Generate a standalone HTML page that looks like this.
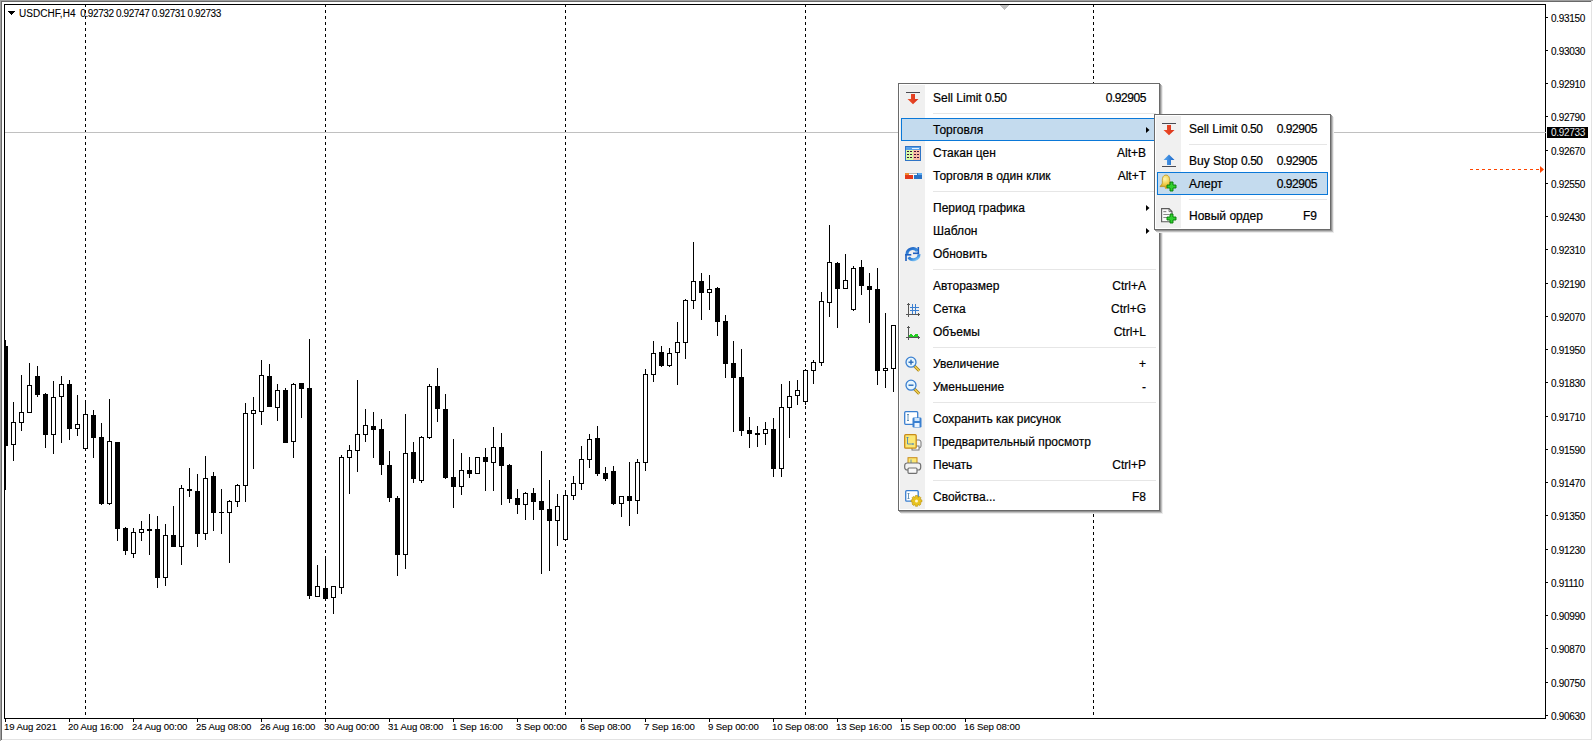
<!DOCTYPE html>
<html><head><meta charset="utf-8"><title>chart</title><style>
html,body{margin:0;padding:0;width:1593px;height:741px;overflow:hidden;background:#fff}
body{position:relative;font-family:"Liberation Sans",sans-serif;color:#000}
svg.c{position:absolute;left:0;top:0}
.t{position:absolute;white-space:nowrap;font-size:10px;line-height:12px;letter-spacing:-0.1px;-webkit-text-stroke:0.1px #000}
.mn{position:absolute;box-sizing:border-box;border:1px solid #6a6a6a;background:#fff;box-shadow:1px 1px 0 #959595,2px 2px 0 #c0c0c0,3px 3px 0 #ececec}
.icol{position:absolute;background:#f0f0f0}
.sep{position:absolute;height:1px;background:#e6e6e6}
.hl{position:absolute;box-sizing:border-box;border:1px solid #0a78d8;background:#c4dbee}
.mt{position:absolute;font-size:12px;line-height:23px;white-space:nowrap;-webkit-text-stroke:0.2px #000}
.dg{letter-spacing:-0.45px}
.ic{position:absolute}
.pl{left:1551px;font-size:10px;letter-spacing:-0.3px}
.tl{top:721px;font-size:9.6px;letter-spacing:-0.1px}
</style></head><body>

<svg class="c" width="1593" height="741" shape-rendering="crispEdges"><rect x="0" y="0" width="1593" height="1" fill="#a0a0a0"/><rect x="0" y="0" width="1" height="741" fill="#a0a0a0"/><rect x="1" y="1" width="1591" height="1" fill="#696969"/><rect x="1" y="1" width="1" height="739" fill="#696969"/><rect x="1591" y="1" width="1" height="739" fill="#e3e3e3"/><rect x="1" y="739" width="1591" height="1" fill="#e3e3e3"/><rect x="4" y="4" width="1542" height="1" fill="#000"/><rect x="4" y="4" width="1" height="715" fill="#000"/><rect x="1545" y="4" width="1" height="715" fill="#000"/><rect x="4" y="718" width="1542" height="1" fill="#000"/><rect x="85" y="4" width="1" height="3" fill="#000"/><rect x="85" y="10" width="1" height="3" fill="#000"/><rect x="85" y="16" width="1" height="3" fill="#000"/><rect x="85" y="22" width="1" height="3" fill="#000"/><rect x="85" y="28" width="1" height="3" fill="#000"/><rect x="85" y="34" width="1" height="3" fill="#000"/><rect x="85" y="40" width="1" height="3" fill="#000"/><rect x="85" y="46" width="1" height="3" fill="#000"/><rect x="85" y="52" width="1" height="3" fill="#000"/><rect x="85" y="58" width="1" height="3" fill="#000"/><rect x="85" y="64" width="1" height="3" fill="#000"/><rect x="85" y="70" width="1" height="3" fill="#000"/><rect x="85" y="76" width="1" height="3" fill="#000"/><rect x="85" y="82" width="1" height="3" fill="#000"/><rect x="85" y="88" width="1" height="3" fill="#000"/><rect x="85" y="94" width="1" height="3" fill="#000"/><rect x="85" y="100" width="1" height="3" fill="#000"/><rect x="85" y="106" width="1" height="3" fill="#000"/><rect x="85" y="112" width="1" height="3" fill="#000"/><rect x="85" y="118" width="1" height="3" fill="#000"/><rect x="85" y="124" width="1" height="3" fill="#000"/><rect x="85" y="130" width="1" height="3" fill="#000"/><rect x="85" y="136" width="1" height="3" fill="#000"/><rect x="85" y="142" width="1" height="3" fill="#000"/><rect x="85" y="148" width="1" height="3" fill="#000"/><rect x="85" y="154" width="1" height="3" fill="#000"/><rect x="85" y="160" width="1" height="3" fill="#000"/><rect x="85" y="166" width="1" height="3" fill="#000"/><rect x="85" y="172" width="1" height="3" fill="#000"/><rect x="85" y="178" width="1" height="3" fill="#000"/><rect x="85" y="184" width="1" height="3" fill="#000"/><rect x="85" y="190" width="1" height="3" fill="#000"/><rect x="85" y="196" width="1" height="3" fill="#000"/><rect x="85" y="202" width="1" height="3" fill="#000"/><rect x="85" y="208" width="1" height="3" fill="#000"/><rect x="85" y="214" width="1" height="3" fill="#000"/><rect x="85" y="220" width="1" height="3" fill="#000"/><rect x="85" y="226" width="1" height="3" fill="#000"/><rect x="85" y="232" width="1" height="3" fill="#000"/><rect x="85" y="238" width="1" height="3" fill="#000"/><rect x="85" y="244" width="1" height="3" fill="#000"/><rect x="85" y="250" width="1" height="3" fill="#000"/><rect x="85" y="256" width="1" height="3" fill="#000"/><rect x="85" y="262" width="1" height="3" fill="#000"/><rect x="85" y="268" width="1" height="3" fill="#000"/><rect x="85" y="274" width="1" height="3" fill="#000"/><rect x="85" y="280" width="1" height="3" fill="#000"/><rect x="85" y="286" width="1" height="3" fill="#000"/><rect x="85" y="292" width="1" height="3" fill="#000"/><rect x="85" y="298" width="1" height="3" fill="#000"/><rect x="85" y="304" width="1" height="3" fill="#000"/><rect x="85" y="310" width="1" height="3" fill="#000"/><rect x="85" y="316" width="1" height="3" fill="#000"/><rect x="85" y="322" width="1" height="3" fill="#000"/><rect x="85" y="328" width="1" height="3" fill="#000"/><rect x="85" y="334" width="1" height="3" fill="#000"/><rect x="85" y="340" width="1" height="3" fill="#000"/><rect x="85" y="346" width="1" height="3" fill="#000"/><rect x="85" y="352" width="1" height="3" fill="#000"/><rect x="85" y="358" width="1" height="3" fill="#000"/><rect x="85" y="364" width="1" height="3" fill="#000"/><rect x="85" y="370" width="1" height="3" fill="#000"/><rect x="85" y="376" width="1" height="3" fill="#000"/><rect x="85" y="382" width="1" height="3" fill="#000"/><rect x="85" y="388" width="1" height="3" fill="#000"/><rect x="85" y="394" width="1" height="3" fill="#000"/><rect x="85" y="400" width="1" height="3" fill="#000"/><rect x="85" y="406" width="1" height="3" fill="#000"/><rect x="85" y="412" width="1" height="3" fill="#000"/><rect x="85" y="418" width="1" height="3" fill="#000"/><rect x="85" y="424" width="1" height="3" fill="#000"/><rect x="85" y="430" width="1" height="3" fill="#000"/><rect x="85" y="436" width="1" height="3" fill="#000"/><rect x="85" y="442" width="1" height="3" fill="#000"/><rect x="85" y="448" width="1" height="3" fill="#000"/><rect x="85" y="454" width="1" height="3" fill="#000"/><rect x="85" y="460" width="1" height="3" fill="#000"/><rect x="85" y="466" width="1" height="3" fill="#000"/><rect x="85" y="472" width="1" height="3" fill="#000"/><rect x="85" y="478" width="1" height="3" fill="#000"/><rect x="85" y="484" width="1" height="3" fill="#000"/><rect x="85" y="490" width="1" height="3" fill="#000"/><rect x="85" y="496" width="1" height="3" fill="#000"/><rect x="85" y="502" width="1" height="3" fill="#000"/><rect x="85" y="508" width="1" height="3" fill="#000"/><rect x="85" y="514" width="1" height="3" fill="#000"/><rect x="85" y="520" width="1" height="3" fill="#000"/><rect x="85" y="526" width="1" height="3" fill="#000"/><rect x="85" y="532" width="1" height="3" fill="#000"/><rect x="85" y="538" width="1" height="3" fill="#000"/><rect x="85" y="544" width="1" height="3" fill="#000"/><rect x="85" y="550" width="1" height="3" fill="#000"/><rect x="85" y="556" width="1" height="3" fill="#000"/><rect x="85" y="562" width="1" height="3" fill="#000"/><rect x="85" y="568" width="1" height="3" fill="#000"/><rect x="85" y="574" width="1" height="3" fill="#000"/><rect x="85" y="580" width="1" height="3" fill="#000"/><rect x="85" y="586" width="1" height="3" fill="#000"/><rect x="85" y="592" width="1" height="3" fill="#000"/><rect x="85" y="598" width="1" height="3" fill="#000"/><rect x="85" y="604" width="1" height="3" fill="#000"/><rect x="85" y="610" width="1" height="3" fill="#000"/><rect x="85" y="616" width="1" height="3" fill="#000"/><rect x="85" y="622" width="1" height="3" fill="#000"/><rect x="85" y="628" width="1" height="3" fill="#000"/><rect x="85" y="634" width="1" height="3" fill="#000"/><rect x="85" y="640" width="1" height="3" fill="#000"/><rect x="85" y="646" width="1" height="3" fill="#000"/><rect x="85" y="652" width="1" height="3" fill="#000"/><rect x="85" y="658" width="1" height="3" fill="#000"/><rect x="85" y="664" width="1" height="3" fill="#000"/><rect x="85" y="670" width="1" height="3" fill="#000"/><rect x="85" y="676" width="1" height="3" fill="#000"/><rect x="85" y="682" width="1" height="3" fill="#000"/><rect x="85" y="688" width="1" height="3" fill="#000"/><rect x="85" y="694" width="1" height="3" fill="#000"/><rect x="85" y="700" width="1" height="3" fill="#000"/><rect x="85" y="706" width="1" height="3" fill="#000"/><rect x="85" y="712" width="1" height="3" fill="#000"/><rect x="325" y="4" width="1" height="3" fill="#000"/><rect x="325" y="10" width="1" height="3" fill="#000"/><rect x="325" y="16" width="1" height="3" fill="#000"/><rect x="325" y="22" width="1" height="3" fill="#000"/><rect x="325" y="28" width="1" height="3" fill="#000"/><rect x="325" y="34" width="1" height="3" fill="#000"/><rect x="325" y="40" width="1" height="3" fill="#000"/><rect x="325" y="46" width="1" height="3" fill="#000"/><rect x="325" y="52" width="1" height="3" fill="#000"/><rect x="325" y="58" width="1" height="3" fill="#000"/><rect x="325" y="64" width="1" height="3" fill="#000"/><rect x="325" y="70" width="1" height="3" fill="#000"/><rect x="325" y="76" width="1" height="3" fill="#000"/><rect x="325" y="82" width="1" height="3" fill="#000"/><rect x="325" y="88" width="1" height="3" fill="#000"/><rect x="325" y="94" width="1" height="3" fill="#000"/><rect x="325" y="100" width="1" height="3" fill="#000"/><rect x="325" y="106" width="1" height="3" fill="#000"/><rect x="325" y="112" width="1" height="3" fill="#000"/><rect x="325" y="118" width="1" height="3" fill="#000"/><rect x="325" y="124" width="1" height="3" fill="#000"/><rect x="325" y="130" width="1" height="3" fill="#000"/><rect x="325" y="136" width="1" height="3" fill="#000"/><rect x="325" y="142" width="1" height="3" fill="#000"/><rect x="325" y="148" width="1" height="3" fill="#000"/><rect x="325" y="154" width="1" height="3" fill="#000"/><rect x="325" y="160" width="1" height="3" fill="#000"/><rect x="325" y="166" width="1" height="3" fill="#000"/><rect x="325" y="172" width="1" height="3" fill="#000"/><rect x="325" y="178" width="1" height="3" fill="#000"/><rect x="325" y="184" width="1" height="3" fill="#000"/><rect x="325" y="190" width="1" height="3" fill="#000"/><rect x="325" y="196" width="1" height="3" fill="#000"/><rect x="325" y="202" width="1" height="3" fill="#000"/><rect x="325" y="208" width="1" height="3" fill="#000"/><rect x="325" y="214" width="1" height="3" fill="#000"/><rect x="325" y="220" width="1" height="3" fill="#000"/><rect x="325" y="226" width="1" height="3" fill="#000"/><rect x="325" y="232" width="1" height="3" fill="#000"/><rect x="325" y="238" width="1" height="3" fill="#000"/><rect x="325" y="244" width="1" height="3" fill="#000"/><rect x="325" y="250" width="1" height="3" fill="#000"/><rect x="325" y="256" width="1" height="3" fill="#000"/><rect x="325" y="262" width="1" height="3" fill="#000"/><rect x="325" y="268" width="1" height="3" fill="#000"/><rect x="325" y="274" width="1" height="3" fill="#000"/><rect x="325" y="280" width="1" height="3" fill="#000"/><rect x="325" y="286" width="1" height="3" fill="#000"/><rect x="325" y="292" width="1" height="3" fill="#000"/><rect x="325" y="298" width="1" height="3" fill="#000"/><rect x="325" y="304" width="1" height="3" fill="#000"/><rect x="325" y="310" width="1" height="3" fill="#000"/><rect x="325" y="316" width="1" height="3" fill="#000"/><rect x="325" y="322" width="1" height="3" fill="#000"/><rect x="325" y="328" width="1" height="3" fill="#000"/><rect x="325" y="334" width="1" height="3" fill="#000"/><rect x="325" y="340" width="1" height="3" fill="#000"/><rect x="325" y="346" width="1" height="3" fill="#000"/><rect x="325" y="352" width="1" height="3" fill="#000"/><rect x="325" y="358" width="1" height="3" fill="#000"/><rect x="325" y="364" width="1" height="3" fill="#000"/><rect x="325" y="370" width="1" height="3" fill="#000"/><rect x="325" y="376" width="1" height="3" fill="#000"/><rect x="325" y="382" width="1" height="3" fill="#000"/><rect x="325" y="388" width="1" height="3" fill="#000"/><rect x="325" y="394" width="1" height="3" fill="#000"/><rect x="325" y="400" width="1" height="3" fill="#000"/><rect x="325" y="406" width="1" height="3" fill="#000"/><rect x="325" y="412" width="1" height="3" fill="#000"/><rect x="325" y="418" width="1" height="3" fill="#000"/><rect x="325" y="424" width="1" height="3" fill="#000"/><rect x="325" y="430" width="1" height="3" fill="#000"/><rect x="325" y="436" width="1" height="3" fill="#000"/><rect x="325" y="442" width="1" height="3" fill="#000"/><rect x="325" y="448" width="1" height="3" fill="#000"/><rect x="325" y="454" width="1" height="3" fill="#000"/><rect x="325" y="460" width="1" height="3" fill="#000"/><rect x="325" y="466" width="1" height="3" fill="#000"/><rect x="325" y="472" width="1" height="3" fill="#000"/><rect x="325" y="478" width="1" height="3" fill="#000"/><rect x="325" y="484" width="1" height="3" fill="#000"/><rect x="325" y="490" width="1" height="3" fill="#000"/><rect x="325" y="496" width="1" height="3" fill="#000"/><rect x="325" y="502" width="1" height="3" fill="#000"/><rect x="325" y="508" width="1" height="3" fill="#000"/><rect x="325" y="514" width="1" height="3" fill="#000"/><rect x="325" y="520" width="1" height="3" fill="#000"/><rect x="325" y="526" width="1" height="3" fill="#000"/><rect x="325" y="532" width="1" height="3" fill="#000"/><rect x="325" y="538" width="1" height="3" fill="#000"/><rect x="325" y="544" width="1" height="3" fill="#000"/><rect x="325" y="550" width="1" height="3" fill="#000"/><rect x="325" y="556" width="1" height="3" fill="#000"/><rect x="325" y="562" width="1" height="3" fill="#000"/><rect x="325" y="568" width="1" height="3" fill="#000"/><rect x="325" y="574" width="1" height="3" fill="#000"/><rect x="325" y="580" width="1" height="3" fill="#000"/><rect x="325" y="586" width="1" height="3" fill="#000"/><rect x="325" y="592" width="1" height="3" fill="#000"/><rect x="325" y="598" width="1" height="3" fill="#000"/><rect x="325" y="604" width="1" height="3" fill="#000"/><rect x="325" y="610" width="1" height="3" fill="#000"/><rect x="325" y="616" width="1" height="3" fill="#000"/><rect x="325" y="622" width="1" height="3" fill="#000"/><rect x="325" y="628" width="1" height="3" fill="#000"/><rect x="325" y="634" width="1" height="3" fill="#000"/><rect x="325" y="640" width="1" height="3" fill="#000"/><rect x="325" y="646" width="1" height="3" fill="#000"/><rect x="325" y="652" width="1" height="3" fill="#000"/><rect x="325" y="658" width="1" height="3" fill="#000"/><rect x="325" y="664" width="1" height="3" fill="#000"/><rect x="325" y="670" width="1" height="3" fill="#000"/><rect x="325" y="676" width="1" height="3" fill="#000"/><rect x="325" y="682" width="1" height="3" fill="#000"/><rect x="325" y="688" width="1" height="3" fill="#000"/><rect x="325" y="694" width="1" height="3" fill="#000"/><rect x="325" y="700" width="1" height="3" fill="#000"/><rect x="325" y="706" width="1" height="3" fill="#000"/><rect x="325" y="712" width="1" height="3" fill="#000"/><rect x="565" y="4" width="1" height="3" fill="#000"/><rect x="565" y="10" width="1" height="3" fill="#000"/><rect x="565" y="16" width="1" height="3" fill="#000"/><rect x="565" y="22" width="1" height="3" fill="#000"/><rect x="565" y="28" width="1" height="3" fill="#000"/><rect x="565" y="34" width="1" height="3" fill="#000"/><rect x="565" y="40" width="1" height="3" fill="#000"/><rect x="565" y="46" width="1" height="3" fill="#000"/><rect x="565" y="52" width="1" height="3" fill="#000"/><rect x="565" y="58" width="1" height="3" fill="#000"/><rect x="565" y="64" width="1" height="3" fill="#000"/><rect x="565" y="70" width="1" height="3" fill="#000"/><rect x="565" y="76" width="1" height="3" fill="#000"/><rect x="565" y="82" width="1" height="3" fill="#000"/><rect x="565" y="88" width="1" height="3" fill="#000"/><rect x="565" y="94" width="1" height="3" fill="#000"/><rect x="565" y="100" width="1" height="3" fill="#000"/><rect x="565" y="106" width="1" height="3" fill="#000"/><rect x="565" y="112" width="1" height="3" fill="#000"/><rect x="565" y="118" width="1" height="3" fill="#000"/><rect x="565" y="124" width="1" height="3" fill="#000"/><rect x="565" y="130" width="1" height="3" fill="#000"/><rect x="565" y="136" width="1" height="3" fill="#000"/><rect x="565" y="142" width="1" height="3" fill="#000"/><rect x="565" y="148" width="1" height="3" fill="#000"/><rect x="565" y="154" width="1" height="3" fill="#000"/><rect x="565" y="160" width="1" height="3" fill="#000"/><rect x="565" y="166" width="1" height="3" fill="#000"/><rect x="565" y="172" width="1" height="3" fill="#000"/><rect x="565" y="178" width="1" height="3" fill="#000"/><rect x="565" y="184" width="1" height="3" fill="#000"/><rect x="565" y="190" width="1" height="3" fill="#000"/><rect x="565" y="196" width="1" height="3" fill="#000"/><rect x="565" y="202" width="1" height="3" fill="#000"/><rect x="565" y="208" width="1" height="3" fill="#000"/><rect x="565" y="214" width="1" height="3" fill="#000"/><rect x="565" y="220" width="1" height="3" fill="#000"/><rect x="565" y="226" width="1" height="3" fill="#000"/><rect x="565" y="232" width="1" height="3" fill="#000"/><rect x="565" y="238" width="1" height="3" fill="#000"/><rect x="565" y="244" width="1" height="3" fill="#000"/><rect x="565" y="250" width="1" height="3" fill="#000"/><rect x="565" y="256" width="1" height="3" fill="#000"/><rect x="565" y="262" width="1" height="3" fill="#000"/><rect x="565" y="268" width="1" height="3" fill="#000"/><rect x="565" y="274" width="1" height="3" fill="#000"/><rect x="565" y="280" width="1" height="3" fill="#000"/><rect x="565" y="286" width="1" height="3" fill="#000"/><rect x="565" y="292" width="1" height="3" fill="#000"/><rect x="565" y="298" width="1" height="3" fill="#000"/><rect x="565" y="304" width="1" height="3" fill="#000"/><rect x="565" y="310" width="1" height="3" fill="#000"/><rect x="565" y="316" width="1" height="3" fill="#000"/><rect x="565" y="322" width="1" height="3" fill="#000"/><rect x="565" y="328" width="1" height="3" fill="#000"/><rect x="565" y="334" width="1" height="3" fill="#000"/><rect x="565" y="340" width="1" height="3" fill="#000"/><rect x="565" y="346" width="1" height="3" fill="#000"/><rect x="565" y="352" width="1" height="3" fill="#000"/><rect x="565" y="358" width="1" height="3" fill="#000"/><rect x="565" y="364" width="1" height="3" fill="#000"/><rect x="565" y="370" width="1" height="3" fill="#000"/><rect x="565" y="376" width="1" height="3" fill="#000"/><rect x="565" y="382" width="1" height="3" fill="#000"/><rect x="565" y="388" width="1" height="3" fill="#000"/><rect x="565" y="394" width="1" height="3" fill="#000"/><rect x="565" y="400" width="1" height="3" fill="#000"/><rect x="565" y="406" width="1" height="3" fill="#000"/><rect x="565" y="412" width="1" height="3" fill="#000"/><rect x="565" y="418" width="1" height="3" fill="#000"/><rect x="565" y="424" width="1" height="3" fill="#000"/><rect x="565" y="430" width="1" height="3" fill="#000"/><rect x="565" y="436" width="1" height="3" fill="#000"/><rect x="565" y="442" width="1" height="3" fill="#000"/><rect x="565" y="448" width="1" height="3" fill="#000"/><rect x="565" y="454" width="1" height="3" fill="#000"/><rect x="565" y="460" width="1" height="3" fill="#000"/><rect x="565" y="466" width="1" height="3" fill="#000"/><rect x="565" y="472" width="1" height="3" fill="#000"/><rect x="565" y="478" width="1" height="3" fill="#000"/><rect x="565" y="484" width="1" height="3" fill="#000"/><rect x="565" y="490" width="1" height="3" fill="#000"/><rect x="565" y="496" width="1" height="3" fill="#000"/><rect x="565" y="502" width="1" height="3" fill="#000"/><rect x="565" y="508" width="1" height="3" fill="#000"/><rect x="565" y="514" width="1" height="3" fill="#000"/><rect x="565" y="520" width="1" height="3" fill="#000"/><rect x="565" y="526" width="1" height="3" fill="#000"/><rect x="565" y="532" width="1" height="3" fill="#000"/><rect x="565" y="538" width="1" height="3" fill="#000"/><rect x="565" y="544" width="1" height="3" fill="#000"/><rect x="565" y="550" width="1" height="3" fill="#000"/><rect x="565" y="556" width="1" height="3" fill="#000"/><rect x="565" y="562" width="1" height="3" fill="#000"/><rect x="565" y="568" width="1" height="3" fill="#000"/><rect x="565" y="574" width="1" height="3" fill="#000"/><rect x="565" y="580" width="1" height="3" fill="#000"/><rect x="565" y="586" width="1" height="3" fill="#000"/><rect x="565" y="592" width="1" height="3" fill="#000"/><rect x="565" y="598" width="1" height="3" fill="#000"/><rect x="565" y="604" width="1" height="3" fill="#000"/><rect x="565" y="610" width="1" height="3" fill="#000"/><rect x="565" y="616" width="1" height="3" fill="#000"/><rect x="565" y="622" width="1" height="3" fill="#000"/><rect x="565" y="628" width="1" height="3" fill="#000"/><rect x="565" y="634" width="1" height="3" fill="#000"/><rect x="565" y="640" width="1" height="3" fill="#000"/><rect x="565" y="646" width="1" height="3" fill="#000"/><rect x="565" y="652" width="1" height="3" fill="#000"/><rect x="565" y="658" width="1" height="3" fill="#000"/><rect x="565" y="664" width="1" height="3" fill="#000"/><rect x="565" y="670" width="1" height="3" fill="#000"/><rect x="565" y="676" width="1" height="3" fill="#000"/><rect x="565" y="682" width="1" height="3" fill="#000"/><rect x="565" y="688" width="1" height="3" fill="#000"/><rect x="565" y="694" width="1" height="3" fill="#000"/><rect x="565" y="700" width="1" height="3" fill="#000"/><rect x="565" y="706" width="1" height="3" fill="#000"/><rect x="565" y="712" width="1" height="3" fill="#000"/><rect x="805" y="4" width="1" height="3" fill="#000"/><rect x="805" y="10" width="1" height="3" fill="#000"/><rect x="805" y="16" width="1" height="3" fill="#000"/><rect x="805" y="22" width="1" height="3" fill="#000"/><rect x="805" y="28" width="1" height="3" fill="#000"/><rect x="805" y="34" width="1" height="3" fill="#000"/><rect x="805" y="40" width="1" height="3" fill="#000"/><rect x="805" y="46" width="1" height="3" fill="#000"/><rect x="805" y="52" width="1" height="3" fill="#000"/><rect x="805" y="58" width="1" height="3" fill="#000"/><rect x="805" y="64" width="1" height="3" fill="#000"/><rect x="805" y="70" width="1" height="3" fill="#000"/><rect x="805" y="76" width="1" height="3" fill="#000"/><rect x="805" y="82" width="1" height="3" fill="#000"/><rect x="805" y="88" width="1" height="3" fill="#000"/><rect x="805" y="94" width="1" height="3" fill="#000"/><rect x="805" y="100" width="1" height="3" fill="#000"/><rect x="805" y="106" width="1" height="3" fill="#000"/><rect x="805" y="112" width="1" height="3" fill="#000"/><rect x="805" y="118" width="1" height="3" fill="#000"/><rect x="805" y="124" width="1" height="3" fill="#000"/><rect x="805" y="130" width="1" height="3" fill="#000"/><rect x="805" y="136" width="1" height="3" fill="#000"/><rect x="805" y="142" width="1" height="3" fill="#000"/><rect x="805" y="148" width="1" height="3" fill="#000"/><rect x="805" y="154" width="1" height="3" fill="#000"/><rect x="805" y="160" width="1" height="3" fill="#000"/><rect x="805" y="166" width="1" height="3" fill="#000"/><rect x="805" y="172" width="1" height="3" fill="#000"/><rect x="805" y="178" width="1" height="3" fill="#000"/><rect x="805" y="184" width="1" height="3" fill="#000"/><rect x="805" y="190" width="1" height="3" fill="#000"/><rect x="805" y="196" width="1" height="3" fill="#000"/><rect x="805" y="202" width="1" height="3" fill="#000"/><rect x="805" y="208" width="1" height="3" fill="#000"/><rect x="805" y="214" width="1" height="3" fill="#000"/><rect x="805" y="220" width="1" height="3" fill="#000"/><rect x="805" y="226" width="1" height="3" fill="#000"/><rect x="805" y="232" width="1" height="3" fill="#000"/><rect x="805" y="238" width="1" height="3" fill="#000"/><rect x="805" y="244" width="1" height="3" fill="#000"/><rect x="805" y="250" width="1" height="3" fill="#000"/><rect x="805" y="256" width="1" height="3" fill="#000"/><rect x="805" y="262" width="1" height="3" fill="#000"/><rect x="805" y="268" width="1" height="3" fill="#000"/><rect x="805" y="274" width="1" height="3" fill="#000"/><rect x="805" y="280" width="1" height="3" fill="#000"/><rect x="805" y="286" width="1" height="3" fill="#000"/><rect x="805" y="292" width="1" height="3" fill="#000"/><rect x="805" y="298" width="1" height="3" fill="#000"/><rect x="805" y="304" width="1" height="3" fill="#000"/><rect x="805" y="310" width="1" height="3" fill="#000"/><rect x="805" y="316" width="1" height="3" fill="#000"/><rect x="805" y="322" width="1" height="3" fill="#000"/><rect x="805" y="328" width="1" height="3" fill="#000"/><rect x="805" y="334" width="1" height="3" fill="#000"/><rect x="805" y="340" width="1" height="3" fill="#000"/><rect x="805" y="346" width="1" height="3" fill="#000"/><rect x="805" y="352" width="1" height="3" fill="#000"/><rect x="805" y="358" width="1" height="3" fill="#000"/><rect x="805" y="364" width="1" height="3" fill="#000"/><rect x="805" y="370" width="1" height="3" fill="#000"/><rect x="805" y="376" width="1" height="3" fill="#000"/><rect x="805" y="382" width="1" height="3" fill="#000"/><rect x="805" y="388" width="1" height="3" fill="#000"/><rect x="805" y="394" width="1" height="3" fill="#000"/><rect x="805" y="400" width="1" height="3" fill="#000"/><rect x="805" y="406" width="1" height="3" fill="#000"/><rect x="805" y="412" width="1" height="3" fill="#000"/><rect x="805" y="418" width="1" height="3" fill="#000"/><rect x="805" y="424" width="1" height="3" fill="#000"/><rect x="805" y="430" width="1" height="3" fill="#000"/><rect x="805" y="436" width="1" height="3" fill="#000"/><rect x="805" y="442" width="1" height="3" fill="#000"/><rect x="805" y="448" width="1" height="3" fill="#000"/><rect x="805" y="454" width="1" height="3" fill="#000"/><rect x="805" y="460" width="1" height="3" fill="#000"/><rect x="805" y="466" width="1" height="3" fill="#000"/><rect x="805" y="472" width="1" height="3" fill="#000"/><rect x="805" y="478" width="1" height="3" fill="#000"/><rect x="805" y="484" width="1" height="3" fill="#000"/><rect x="805" y="490" width="1" height="3" fill="#000"/><rect x="805" y="496" width="1" height="3" fill="#000"/><rect x="805" y="502" width="1" height="3" fill="#000"/><rect x="805" y="508" width="1" height="3" fill="#000"/><rect x="805" y="514" width="1" height="3" fill="#000"/><rect x="805" y="520" width="1" height="3" fill="#000"/><rect x="805" y="526" width="1" height="3" fill="#000"/><rect x="805" y="532" width="1" height="3" fill="#000"/><rect x="805" y="538" width="1" height="3" fill="#000"/><rect x="805" y="544" width="1" height="3" fill="#000"/><rect x="805" y="550" width="1" height="3" fill="#000"/><rect x="805" y="556" width="1" height="3" fill="#000"/><rect x="805" y="562" width="1" height="3" fill="#000"/><rect x="805" y="568" width="1" height="3" fill="#000"/><rect x="805" y="574" width="1" height="3" fill="#000"/><rect x="805" y="580" width="1" height="3" fill="#000"/><rect x="805" y="586" width="1" height="3" fill="#000"/><rect x="805" y="592" width="1" height="3" fill="#000"/><rect x="805" y="598" width="1" height="3" fill="#000"/><rect x="805" y="604" width="1" height="3" fill="#000"/><rect x="805" y="610" width="1" height="3" fill="#000"/><rect x="805" y="616" width="1" height="3" fill="#000"/><rect x="805" y="622" width="1" height="3" fill="#000"/><rect x="805" y="628" width="1" height="3" fill="#000"/><rect x="805" y="634" width="1" height="3" fill="#000"/><rect x="805" y="640" width="1" height="3" fill="#000"/><rect x="805" y="646" width="1" height="3" fill="#000"/><rect x="805" y="652" width="1" height="3" fill="#000"/><rect x="805" y="658" width="1" height="3" fill="#000"/><rect x="805" y="664" width="1" height="3" fill="#000"/><rect x="805" y="670" width="1" height="3" fill="#000"/><rect x="805" y="676" width="1" height="3" fill="#000"/><rect x="805" y="682" width="1" height="3" fill="#000"/><rect x="805" y="688" width="1" height="3" fill="#000"/><rect x="805" y="694" width="1" height="3" fill="#000"/><rect x="805" y="700" width="1" height="3" fill="#000"/><rect x="805" y="706" width="1" height="3" fill="#000"/><rect x="805" y="712" width="1" height="3" fill="#000"/><rect x="1093" y="4" width="1" height="3" fill="#000"/><rect x="1093" y="10" width="1" height="3" fill="#000"/><rect x="1093" y="16" width="1" height="3" fill="#000"/><rect x="1093" y="22" width="1" height="3" fill="#000"/><rect x="1093" y="28" width="1" height="3" fill="#000"/><rect x="1093" y="34" width="1" height="3" fill="#000"/><rect x="1093" y="40" width="1" height="3" fill="#000"/><rect x="1093" y="46" width="1" height="3" fill="#000"/><rect x="1093" y="52" width="1" height="3" fill="#000"/><rect x="1093" y="58" width="1" height="3" fill="#000"/><rect x="1093" y="64" width="1" height="3" fill="#000"/><rect x="1093" y="70" width="1" height="3" fill="#000"/><rect x="1093" y="76" width="1" height="3" fill="#000"/><rect x="1093" y="82" width="1" height="3" fill="#000"/><rect x="1093" y="88" width="1" height="3" fill="#000"/><rect x="1093" y="94" width="1" height="3" fill="#000"/><rect x="1093" y="100" width="1" height="3" fill="#000"/><rect x="1093" y="106" width="1" height="3" fill="#000"/><rect x="1093" y="112" width="1" height="3" fill="#000"/><rect x="1093" y="118" width="1" height="3" fill="#000"/><rect x="1093" y="124" width="1" height="3" fill="#000"/><rect x="1093" y="130" width="1" height="3" fill="#000"/><rect x="1093" y="136" width="1" height="3" fill="#000"/><rect x="1093" y="142" width="1" height="3" fill="#000"/><rect x="1093" y="148" width="1" height="3" fill="#000"/><rect x="1093" y="154" width="1" height="3" fill="#000"/><rect x="1093" y="160" width="1" height="3" fill="#000"/><rect x="1093" y="166" width="1" height="3" fill="#000"/><rect x="1093" y="172" width="1" height="3" fill="#000"/><rect x="1093" y="178" width="1" height="3" fill="#000"/><rect x="1093" y="184" width="1" height="3" fill="#000"/><rect x="1093" y="190" width="1" height="3" fill="#000"/><rect x="1093" y="196" width="1" height="3" fill="#000"/><rect x="1093" y="202" width="1" height="3" fill="#000"/><rect x="1093" y="208" width="1" height="3" fill="#000"/><rect x="1093" y="214" width="1" height="3" fill="#000"/><rect x="1093" y="220" width="1" height="3" fill="#000"/><rect x="1093" y="226" width="1" height="3" fill="#000"/><rect x="1093" y="232" width="1" height="3" fill="#000"/><rect x="1093" y="238" width="1" height="3" fill="#000"/><rect x="1093" y="244" width="1" height="3" fill="#000"/><rect x="1093" y="250" width="1" height="3" fill="#000"/><rect x="1093" y="256" width="1" height="3" fill="#000"/><rect x="1093" y="262" width="1" height="3" fill="#000"/><rect x="1093" y="268" width="1" height="3" fill="#000"/><rect x="1093" y="274" width="1" height="3" fill="#000"/><rect x="1093" y="280" width="1" height="3" fill="#000"/><rect x="1093" y="286" width="1" height="3" fill="#000"/><rect x="1093" y="292" width="1" height="3" fill="#000"/><rect x="1093" y="298" width="1" height="3" fill="#000"/><rect x="1093" y="304" width="1" height="3" fill="#000"/><rect x="1093" y="310" width="1" height="3" fill="#000"/><rect x="1093" y="316" width="1" height="3" fill="#000"/><rect x="1093" y="322" width="1" height="3" fill="#000"/><rect x="1093" y="328" width="1" height="3" fill="#000"/><rect x="1093" y="334" width="1" height="3" fill="#000"/><rect x="1093" y="340" width="1" height="3" fill="#000"/><rect x="1093" y="346" width="1" height="3" fill="#000"/><rect x="1093" y="352" width="1" height="3" fill="#000"/><rect x="1093" y="358" width="1" height="3" fill="#000"/><rect x="1093" y="364" width="1" height="3" fill="#000"/><rect x="1093" y="370" width="1" height="3" fill="#000"/><rect x="1093" y="376" width="1" height="3" fill="#000"/><rect x="1093" y="382" width="1" height="3" fill="#000"/><rect x="1093" y="388" width="1" height="3" fill="#000"/><rect x="1093" y="394" width="1" height="3" fill="#000"/><rect x="1093" y="400" width="1" height="3" fill="#000"/><rect x="1093" y="406" width="1" height="3" fill="#000"/><rect x="1093" y="412" width="1" height="3" fill="#000"/><rect x="1093" y="418" width="1" height="3" fill="#000"/><rect x="1093" y="424" width="1" height="3" fill="#000"/><rect x="1093" y="430" width="1" height="3" fill="#000"/><rect x="1093" y="436" width="1" height="3" fill="#000"/><rect x="1093" y="442" width="1" height="3" fill="#000"/><rect x="1093" y="448" width="1" height="3" fill="#000"/><rect x="1093" y="454" width="1" height="3" fill="#000"/><rect x="1093" y="460" width="1" height="3" fill="#000"/><rect x="1093" y="466" width="1" height="3" fill="#000"/><rect x="1093" y="472" width="1" height="3" fill="#000"/><rect x="1093" y="478" width="1" height="3" fill="#000"/><rect x="1093" y="484" width="1" height="3" fill="#000"/><rect x="1093" y="490" width="1" height="3" fill="#000"/><rect x="1093" y="496" width="1" height="3" fill="#000"/><rect x="1093" y="502" width="1" height="3" fill="#000"/><rect x="1093" y="508" width="1" height="3" fill="#000"/><rect x="1093" y="514" width="1" height="3" fill="#000"/><rect x="1093" y="520" width="1" height="3" fill="#000"/><rect x="1093" y="526" width="1" height="3" fill="#000"/><rect x="1093" y="532" width="1" height="3" fill="#000"/><rect x="1093" y="538" width="1" height="3" fill="#000"/><rect x="1093" y="544" width="1" height="3" fill="#000"/><rect x="1093" y="550" width="1" height="3" fill="#000"/><rect x="1093" y="556" width="1" height="3" fill="#000"/><rect x="1093" y="562" width="1" height="3" fill="#000"/><rect x="1093" y="568" width="1" height="3" fill="#000"/><rect x="1093" y="574" width="1" height="3" fill="#000"/><rect x="1093" y="580" width="1" height="3" fill="#000"/><rect x="1093" y="586" width="1" height="3" fill="#000"/><rect x="1093" y="592" width="1" height="3" fill="#000"/><rect x="1093" y="598" width="1" height="3" fill="#000"/><rect x="1093" y="604" width="1" height="3" fill="#000"/><rect x="1093" y="610" width="1" height="3" fill="#000"/><rect x="1093" y="616" width="1" height="3" fill="#000"/><rect x="1093" y="622" width="1" height="3" fill="#000"/><rect x="1093" y="628" width="1" height="3" fill="#000"/><rect x="1093" y="634" width="1" height="3" fill="#000"/><rect x="1093" y="640" width="1" height="3" fill="#000"/><rect x="1093" y="646" width="1" height="3" fill="#000"/><rect x="1093" y="652" width="1" height="3" fill="#000"/><rect x="1093" y="658" width="1" height="3" fill="#000"/><rect x="1093" y="664" width="1" height="3" fill="#000"/><rect x="1093" y="670" width="1" height="3" fill="#000"/><rect x="1093" y="676" width="1" height="3" fill="#000"/><rect x="1093" y="682" width="1" height="3" fill="#000"/><rect x="1093" y="688" width="1" height="3" fill="#000"/><rect x="1093" y="694" width="1" height="3" fill="#000"/><rect x="1093" y="700" width="1" height="3" fill="#000"/><rect x="1093" y="706" width="1" height="3" fill="#000"/><rect x="1093" y="712" width="1" height="3" fill="#000"/><rect x="5" y="132" width="1541" height="1" fill="#c0c0c0"/><rect x="5" y="340" width="1" height="150" fill="#000"/><rect x="3" y="346" width="5" height="100" fill="#000"/><rect x="13" y="402" width="1" height="59" fill="#000"/><rect x="11" y="422" width="5" height="23" fill="#000"/><rect x="12" y="423" width="3" height="21" fill="#fff"/><rect x="21" y="375" width="1" height="56" fill="#000"/><rect x="19" y="412" width="5" height="11" fill="#000"/><rect x="20" y="413" width="3" height="9" fill="#fff"/><rect x="29" y="363" width="1" height="50" fill="#000"/><rect x="27" y="385" width="5" height="28" fill="#000"/><rect x="28" y="386" width="3" height="26" fill="#fff"/><rect x="37" y="366" width="1" height="31" fill="#000"/><rect x="35" y="376" width="5" height="19" fill="#000"/><rect x="45" y="393" width="1" height="55" fill="#000"/><rect x="43" y="394" width="5" height="41" fill="#000"/><rect x="53" y="381" width="1" height="73" fill="#000"/><rect x="51" y="397" width="5" height="38" fill="#000"/><rect x="52" y="398" width="3" height="36" fill="#fff"/><rect x="61" y="376" width="1" height="67" fill="#000"/><rect x="59" y="384" width="5" height="13" fill="#000"/><rect x="60" y="385" width="3" height="11" fill="#fff"/><rect x="69" y="380" width="1" height="60" fill="#000"/><rect x="67" y="384" width="5" height="45" fill="#000"/><rect x="77" y="395" width="1" height="41" fill="#000"/><rect x="75" y="424" width="5" height="5" fill="#000"/><rect x="76" y="425" width="3" height="3" fill="#fff"/><rect x="85" y="400" width="1" height="51" fill="#000"/><rect x="83" y="414" width="5" height="35" fill="#000"/><rect x="84" y="415" width="3" height="33" fill="#fff"/><rect x="93" y="410" width="1" height="48" fill="#000"/><rect x="91" y="415" width="5" height="23" fill="#000"/><rect x="101" y="423" width="1" height="82" fill="#000"/><rect x="99" y="437" width="5" height="67" fill="#000"/><rect x="109" y="399" width="1" height="106" fill="#000"/><rect x="107" y="441" width="5" height="63" fill="#000"/><rect x="108" y="442" width="3" height="61" fill="#fff"/><rect x="117" y="442" width="1" height="99" fill="#000"/><rect x="115" y="442" width="5" height="87" fill="#000"/><rect x="125" y="527" width="1" height="28" fill="#000"/><rect x="123" y="528" width="5" height="23" fill="#000"/><rect x="133" y="528" width="1" height="30" fill="#000"/><rect x="131" y="532" width="5" height="22" fill="#000"/><rect x="132" y="533" width="3" height="20" fill="#fff"/><rect x="141" y="521" width="1" height="20" fill="#000"/><rect x="139" y="529" width="5" height="4" fill="#000"/><rect x="140" y="530" width="3" height="2" fill="#fff"/><rect x="149" y="514" width="1" height="41" fill="#000"/><rect x="147" y="529" width="5" height="2" fill="#000"/><rect x="157" y="516" width="1" height="72" fill="#000"/><rect x="155" y="529" width="5" height="49" fill="#000"/><rect x="165" y="524" width="1" height="62" fill="#000"/><rect x="163" y="535" width="5" height="43" fill="#000"/><rect x="164" y="536" width="3" height="41" fill="#fff"/><rect x="173" y="506" width="1" height="41" fill="#000"/><rect x="171" y="535" width="5" height="12" fill="#000"/><rect x="181" y="485" width="1" height="80" fill="#000"/><rect x="179" y="488" width="5" height="59" fill="#000"/><rect x="180" y="489" width="3" height="57" fill="#fff"/><rect x="189" y="468" width="1" height="29" fill="#000"/><rect x="187" y="489" width="5" height="2" fill="#000"/><rect x="197" y="474" width="1" height="73" fill="#000"/><rect x="195" y="491" width="5" height="43" fill="#000"/><rect x="205" y="456" width="1" height="84" fill="#000"/><rect x="203" y="478" width="5" height="56" fill="#000"/><rect x="204" y="479" width="3" height="54" fill="#fff"/><rect x="213" y="472" width="1" height="59" fill="#000"/><rect x="211" y="476" width="5" height="37" fill="#000"/><rect x="221" y="489" width="1" height="45" fill="#000"/><rect x="219" y="512" width="5" height="1" fill="#000"/><rect x="229" y="500" width="1" height="63" fill="#000"/><rect x="227" y="501" width="5" height="12" fill="#000"/><rect x="228" y="502" width="3" height="10" fill="#fff"/><rect x="237" y="484" width="1" height="23" fill="#000"/><rect x="235" y="485" width="5" height="17" fill="#000"/><rect x="236" y="486" width="3" height="15" fill="#fff"/><rect x="245" y="403" width="1" height="99" fill="#000"/><rect x="243" y="413" width="5" height="73" fill="#000"/><rect x="244" y="414" width="3" height="71" fill="#fff"/><rect x="253" y="397" width="1" height="72" fill="#000"/><rect x="251" y="410" width="5" height="4" fill="#000"/><rect x="252" y="411" width="3" height="2" fill="#fff"/><rect x="261" y="360" width="1" height="65" fill="#000"/><rect x="259" y="375" width="5" height="37" fill="#000"/><rect x="260" y="376" width="3" height="35" fill="#fff"/><rect x="269" y="364" width="1" height="43" fill="#000"/><rect x="267" y="376" width="5" height="31" fill="#000"/><rect x="277" y="384" width="1" height="37" fill="#000"/><rect x="275" y="390" width="5" height="18" fill="#000"/><rect x="276" y="391" width="3" height="16" fill="#fff"/><rect x="285" y="388" width="1" height="55" fill="#000"/><rect x="283" y="390" width="5" height="53" fill="#000"/><rect x="293" y="383" width="1" height="75" fill="#000"/><rect x="291" y="384" width="5" height="58" fill="#000"/><rect x="292" y="385" width="3" height="56" fill="#fff"/><rect x="301" y="383" width="1" height="35" fill="#000"/><rect x="299" y="383" width="5" height="6" fill="#000"/><rect x="309" y="339" width="1" height="260" fill="#000"/><rect x="307" y="388" width="5" height="208" fill="#000"/><rect x="317" y="565" width="1" height="32" fill="#000"/><rect x="315" y="586" width="5" height="11" fill="#000"/><rect x="316" y="587" width="3" height="9" fill="#fff"/><rect x="325" y="556" width="1" height="44" fill="#000"/><rect x="323" y="588" width="5" height="11" fill="#000"/><rect x="333" y="586" width="1" height="28" fill="#000"/><rect x="331" y="586" width="5" height="12" fill="#000"/><rect x="332" y="587" width="3" height="10" fill="#fff"/><rect x="341" y="455" width="1" height="139" fill="#000"/><rect x="339" y="457" width="5" height="131" fill="#000"/><rect x="340" y="458" width="3" height="129" fill="#fff"/><rect x="349" y="445" width="1" height="49" fill="#000"/><rect x="347" y="450" width="5" height="8" fill="#000"/><rect x="348" y="451" width="3" height="6" fill="#fff"/><rect x="357" y="380" width="1" height="92" fill="#000"/><rect x="355" y="434" width="5" height="17" fill="#000"/><rect x="356" y="435" width="3" height="15" fill="#fff"/><rect x="365" y="409" width="1" height="33" fill="#000"/><rect x="363" y="425" width="5" height="10" fill="#000"/><rect x="364" y="426" width="3" height="8" fill="#fff"/><rect x="373" y="412" width="1" height="46" fill="#000"/><rect x="371" y="426" width="5" height="4" fill="#000"/><rect x="381" y="419" width="1" height="56" fill="#000"/><rect x="379" y="429" width="5" height="36" fill="#000"/><rect x="389" y="451" width="1" height="51" fill="#000"/><rect x="387" y="465" width="5" height="33" fill="#000"/><rect x="397" y="496" width="1" height="80" fill="#000"/><rect x="395" y="498" width="5" height="57" fill="#000"/><rect x="405" y="414" width="1" height="155" fill="#000"/><rect x="403" y="453" width="5" height="102" fill="#000"/><rect x="404" y="454" width="3" height="100" fill="#fff"/><rect x="413" y="442" width="1" height="41" fill="#000"/><rect x="411" y="452" width="5" height="27" fill="#000"/><rect x="421" y="436" width="1" height="47" fill="#000"/><rect x="419" y="437" width="5" height="44" fill="#000"/><rect x="420" y="438" width="3" height="42" fill="#fff"/><rect x="429" y="384" width="1" height="55" fill="#000"/><rect x="427" y="386" width="5" height="52" fill="#000"/><rect x="428" y="387" width="3" height="50" fill="#fff"/><rect x="437" y="368" width="1" height="54" fill="#000"/><rect x="435" y="386" width="5" height="23" fill="#000"/><rect x="445" y="394" width="1" height="85" fill="#000"/><rect x="443" y="409" width="5" height="69" fill="#000"/><rect x="453" y="439" width="1" height="69" fill="#000"/><rect x="451" y="477" width="5" height="10" fill="#000"/><rect x="461" y="453" width="1" height="42" fill="#000"/><rect x="459" y="470" width="5" height="17" fill="#000"/><rect x="460" y="471" width="3" height="15" fill="#fff"/><rect x="469" y="457" width="1" height="21" fill="#000"/><rect x="467" y="470" width="5" height="4" fill="#000"/><rect x="477" y="457" width="1" height="17" fill="#000"/><rect x="475" y="457" width="5" height="17" fill="#000"/><rect x="476" y="458" width="3" height="15" fill="#fff"/><rect x="485" y="448" width="1" height="43" fill="#000"/><rect x="483" y="457" width="5" height="5" fill="#000"/><rect x="493" y="427" width="1" height="64" fill="#000"/><rect x="491" y="447" width="5" height="16" fill="#000"/><rect x="492" y="448" width="3" height="14" fill="#fff"/><rect x="501" y="433" width="1" height="72" fill="#000"/><rect x="499" y="447" width="5" height="19" fill="#000"/><rect x="509" y="464" width="1" height="39" fill="#000"/><rect x="507" y="465" width="5" height="34" fill="#000"/><rect x="517" y="489" width="1" height="25" fill="#000"/><rect x="515" y="498" width="5" height="7" fill="#000"/><rect x="525" y="492" width="1" height="28" fill="#000"/><rect x="523" y="493" width="5" height="12" fill="#000"/><rect x="524" y="494" width="3" height="10" fill="#fff"/><rect x="533" y="488" width="1" height="32" fill="#000"/><rect x="531" y="493" width="5" height="9" fill="#000"/><rect x="541" y="451" width="1" height="123" fill="#000"/><rect x="539" y="501" width="5" height="9" fill="#000"/><rect x="549" y="480" width="1" height="91" fill="#000"/><rect x="547" y="509" width="5" height="12" fill="#000"/><rect x="557" y="494" width="1" height="52" fill="#000"/><rect x="555" y="506" width="5" height="15" fill="#000"/><rect x="556" y="507" width="3" height="13" fill="#fff"/><rect x="565" y="490" width="1" height="51" fill="#000"/><rect x="563" y="495" width="5" height="45" fill="#000"/><rect x="564" y="496" width="3" height="43" fill="#fff"/><rect x="573" y="476" width="1" height="24" fill="#000"/><rect x="571" y="483" width="5" height="13" fill="#000"/><rect x="572" y="484" width="3" height="11" fill="#fff"/><rect x="581" y="446" width="1" height="44" fill="#000"/><rect x="579" y="459" width="5" height="25" fill="#000"/><rect x="580" y="460" width="3" height="23" fill="#fff"/><rect x="589" y="434" width="1" height="34" fill="#000"/><rect x="587" y="439" width="5" height="21" fill="#000"/><rect x="588" y="440" width="3" height="19" fill="#fff"/><rect x="597" y="426" width="1" height="50" fill="#000"/><rect x="595" y="438" width="5" height="36" fill="#000"/><rect x="605" y="467" width="1" height="14" fill="#000"/><rect x="603" y="473" width="5" height="6" fill="#000"/><rect x="613" y="466" width="1" height="39" fill="#000"/><rect x="611" y="471" width="5" height="33" fill="#000"/><rect x="621" y="496" width="1" height="21" fill="#000"/><rect x="619" y="496" width="5" height="8" fill="#000"/><rect x="620" y="497" width="3" height="6" fill="#fff"/><rect x="629" y="462" width="1" height="64" fill="#000"/><rect x="627" y="496" width="5" height="5" fill="#000"/><rect x="637" y="459" width="1" height="55" fill="#000"/><rect x="635" y="462" width="5" height="39" fill="#000"/><rect x="636" y="463" width="3" height="37" fill="#fff"/><rect x="645" y="369" width="1" height="102" fill="#000"/><rect x="643" y="374" width="5" height="89" fill="#000"/><rect x="644" y="375" width="3" height="87" fill="#fff"/><rect x="653" y="341" width="1" height="41" fill="#000"/><rect x="651" y="353" width="5" height="22" fill="#000"/><rect x="652" y="354" width="3" height="20" fill="#fff"/><rect x="661" y="346" width="1" height="21" fill="#000"/><rect x="659" y="352" width="5" height="14" fill="#000"/><rect x="669" y="348" width="1" height="19" fill="#000"/><rect x="667" y="353" width="5" height="13" fill="#000"/><rect x="668" y="354" width="3" height="11" fill="#fff"/><rect x="677" y="322" width="1" height="63" fill="#000"/><rect x="675" y="342" width="5" height="11" fill="#000"/><rect x="676" y="343" width="3" height="9" fill="#fff"/><rect x="685" y="299" width="1" height="60" fill="#000"/><rect x="683" y="300" width="5" height="43" fill="#000"/><rect x="684" y="301" width="3" height="41" fill="#fff"/><rect x="693" y="242" width="1" height="67" fill="#000"/><rect x="691" y="281" width="5" height="20" fill="#000"/><rect x="692" y="282" width="3" height="18" fill="#fff"/><rect x="701" y="273" width="1" height="47" fill="#000"/><rect x="699" y="281" width="5" height="12" fill="#000"/><rect x="709" y="275" width="1" height="35" fill="#000"/><rect x="707" y="289" width="5" height="4" fill="#000"/><rect x="708" y="290" width="3" height="2" fill="#fff"/><rect x="717" y="287" width="1" height="49" fill="#000"/><rect x="715" y="288" width="5" height="34" fill="#000"/><rect x="725" y="315" width="1" height="63" fill="#000"/><rect x="723" y="321" width="5" height="43" fill="#000"/><rect x="733" y="341" width="1" height="91" fill="#000"/><rect x="731" y="363" width="5" height="15" fill="#000"/><rect x="741" y="349" width="1" height="87" fill="#000"/><rect x="739" y="377" width="5" height="54" fill="#000"/><rect x="749" y="417" width="1" height="31" fill="#000"/><rect x="747" y="430" width="5" height="4" fill="#000"/><rect x="757" y="426" width="1" height="21" fill="#000"/><rect x="755" y="433" width="5" height="2" fill="#000"/><rect x="765" y="422" width="1" height="23" fill="#000"/><rect x="763" y="429" width="5" height="5" fill="#000"/><rect x="764" y="430" width="3" height="3" fill="#fff"/><rect x="773" y="418" width="1" height="59" fill="#000"/><rect x="771" y="429" width="5" height="40" fill="#000"/><rect x="781" y="384" width="1" height="93" fill="#000"/><rect x="779" y="407" width="5" height="62" fill="#000"/><rect x="780" y="408" width="3" height="60" fill="#fff"/><rect x="789" y="381" width="1" height="57" fill="#000"/><rect x="787" y="396" width="5" height="12" fill="#000"/><rect x="788" y="397" width="3" height="10" fill="#fff"/><rect x="797" y="380" width="1" height="25" fill="#000"/><rect x="795" y="390" width="5" height="6" fill="#000"/><rect x="796" y="391" width="3" height="4" fill="#fff"/><rect x="805" y="369" width="1" height="36" fill="#000"/><rect x="803" y="370" width="5" height="32" fill="#000"/><rect x="804" y="371" width="3" height="30" fill="#fff"/><rect x="813" y="360" width="1" height="24" fill="#000"/><rect x="811" y="362" width="5" height="9" fill="#000"/><rect x="812" y="363" width="3" height="7" fill="#fff"/><rect x="821" y="292" width="1" height="74" fill="#000"/><rect x="819" y="301" width="5" height="62" fill="#000"/><rect x="820" y="302" width="3" height="60" fill="#fff"/><rect x="829" y="225" width="1" height="92" fill="#000"/><rect x="827" y="262" width="5" height="41" fill="#000"/><rect x="828" y="263" width="3" height="39" fill="#fff"/><rect x="837" y="262" width="1" height="66" fill="#000"/><rect x="835" y="263" width="5" height="26" fill="#000"/><rect x="845" y="254" width="1" height="35" fill="#000"/><rect x="843" y="280" width="5" height="9" fill="#000"/><rect x="844" y="281" width="3" height="7" fill="#fff"/><rect x="853" y="266" width="1" height="45" fill="#000"/><rect x="851" y="268" width="5" height="42" fill="#000"/><rect x="852" y="269" width="3" height="40" fill="#fff"/><rect x="861" y="260" width="1" height="35" fill="#000"/><rect x="859" y="267" width="5" height="19" fill="#000"/><rect x="869" y="273" width="1" height="50" fill="#000"/><rect x="867" y="286" width="5" height="4" fill="#000"/><rect x="877" y="268" width="1" height="117" fill="#000"/><rect x="875" y="289" width="5" height="82" fill="#000"/><rect x="885" y="313" width="1" height="75" fill="#000"/><rect x="883" y="368" width="5" height="3" fill="#000"/><rect x="884" y="369" width="3" height="1" fill="#fff"/><rect x="893" y="325" width="1" height="67" fill="#000"/><rect x="891" y="325" width="5" height="44" fill="#000"/><rect x="892" y="326" width="3" height="42" fill="#fff"/><rect x="0" y="0" width="1" height="741" fill="#a0a0a0"/><rect x="1" y="1" width="1" height="739" fill="#696969"/><rect x="2" y="2" width="2" height="716" fill="#fff"/><rect x="4" y="4" width="1" height="715" fill="#000"/><rect x="1546" y="17" width="2" height="1" fill="#000"/><rect x="1546" y="50" width="2" height="1" fill="#000"/><rect x="1546" y="83" width="2" height="1" fill="#000"/><rect x="1546" y="116" width="2" height="1" fill="#000"/><rect x="1546" y="150" width="2" height="1" fill="#000"/><rect x="1546" y="183" width="2" height="1" fill="#000"/><rect x="1546" y="216" width="2" height="1" fill="#000"/><rect x="1546" y="249" width="2" height="1" fill="#000"/><rect x="1546" y="283" width="2" height="1" fill="#000"/><rect x="1546" y="316" width="2" height="1" fill="#000"/><rect x="1546" y="349" width="2" height="1" fill="#000"/><rect x="1546" y="382" width="2" height="1" fill="#000"/><rect x="1546" y="416" width="2" height="1" fill="#000"/><rect x="1546" y="449" width="2" height="1" fill="#000"/><rect x="1546" y="482" width="2" height="1" fill="#000"/><rect x="1546" y="515" width="2" height="1" fill="#000"/><rect x="1546" y="549" width="2" height="1" fill="#000"/><rect x="1546" y="582" width="2" height="1" fill="#000"/><rect x="1546" y="615" width="2" height="1" fill="#000"/><rect x="1546" y="648" width="2" height="1" fill="#000"/><rect x="1546" y="682" width="2" height="1" fill="#000"/><rect x="1546" y="715" width="2" height="1" fill="#000"/><rect x="5" y="719" width="1" height="3" fill="#000"/><rect x="69" y="719" width="1" height="3" fill="#000"/><rect x="133" y="719" width="1" height="3" fill="#000"/><rect x="197" y="719" width="1" height="3" fill="#000"/><rect x="261" y="719" width="1" height="3" fill="#000"/><rect x="325" y="719" width="1" height="3" fill="#000"/><rect x="389" y="719" width="1" height="3" fill="#000"/><rect x="453" y="719" width="1" height="3" fill="#000"/><rect x="517" y="719" width="1" height="3" fill="#000"/><rect x="581" y="719" width="1" height="3" fill="#000"/><rect x="645" y="719" width="1" height="3" fill="#000"/><rect x="709" y="719" width="1" height="3" fill="#000"/><rect x="773" y="719" width="1" height="3" fill="#000"/><rect x="837" y="719" width="1" height="3" fill="#000"/><rect x="901" y="719" width="1" height="3" fill="#000"/><rect x="965" y="719" width="1" height="3" fill="#000"/><rect x="1470" y="169" width="3" height="1" fill="#ff4500"/><rect x="1476" y="169" width="3" height="1" fill="#ff4500"/><rect x="1482" y="169" width="3" height="1" fill="#ff4500"/><rect x="1488" y="169" width="3" height="1" fill="#ff4500"/><rect x="1494" y="169" width="3" height="1" fill="#ff4500"/><rect x="1500" y="169" width="3" height="1" fill="#ff4500"/><rect x="1506" y="169" width="3" height="1" fill="#ff4500"/><rect x="1512" y="169" width="3" height="1" fill="#ff4500"/><rect x="1518" y="169" width="3" height="1" fill="#ff4500"/><rect x="1524" y="169" width="3" height="1" fill="#ff4500"/><rect x="1530" y="169" width="3" height="1" fill="#ff4500"/><rect x="1536" y="169" width="3" height="1" fill="#ff4500"/><polygon points="1540,166 1540,173 1544,169.5" fill="#ff4500" shape-rendering="geometricPrecision"/><rect x="1000" y="5" width="9" height="1" fill="#c0c0c0"/><rect x="1001" y="6" width="7" height="1" fill="#c0c0c0"/><rect x="1002" y="7" width="5" height="1" fill="#c0c0c0"/><rect x="1003" y="8" width="3" height="1" fill="#c0c0c0"/><rect x="1004" y="9" width="1" height="1" fill="#c0c0c0"/><rect x="8" y="11" width="7" height="1" fill="#000"/><rect x="9" y="12" width="5" height="1" fill="#000"/><rect x="10" y="13" width="3" height="1" fill="#000"/><rect x="11" y="14" width="1" height="1" fill="#000"/><rect x="1547" y="127" width="41" height="11" fill="#000"/></svg>
<div class="t" style="left:19px;top:8px;letter-spacing:-0.4px"><span style="letter-spacing:0.05px">USDCHF,H4</span>&nbsp; 0.92732 0.92747 0.92731 0.92733</div>
<div class="t pl" style="top:13px">0.93150</div>
<div class="t pl" style="top:46px">0.93030</div>
<div class="t pl" style="top:79px">0.92910</div>
<div class="t pl" style="top:112px">0.92790</div>
<div class="t pl" style="top:146px">0.92670</div>
<div class="t pl" style="top:179px">0.92550</div>
<div class="t pl" style="top:212px">0.92430</div>
<div class="t pl" style="top:245px">0.92310</div>
<div class="t pl" style="top:279px">0.92190</div>
<div class="t pl" style="top:312px">0.92070</div>
<div class="t pl" style="top:345px">0.91950</div>
<div class="t pl" style="top:378px">0.91830</div>
<div class="t pl" style="top:412px">0.91710</div>
<div class="t pl" style="top:445px">0.91590</div>
<div class="t pl" style="top:478px">0.91470</div>
<div class="t pl" style="top:511px">0.91350</div>
<div class="t pl" style="top:545px">0.91230</div>
<div class="t pl" style="top:578px">0.91110</div>
<div class="t pl" style="top:611px">0.90990</div>
<div class="t pl" style="top:644px">0.90870</div>
<div class="t pl" style="top:678px">0.90750</div>
<div class="t pl" style="top:711px">0.90630</div>
<div class="t pl" style="top:127px;color:#fff">0.92733</div>
<div class="t tl" style="left:4px">19 Aug 2021</div>
<div class="t tl" style="left:68px">20 Aug 16:00</div>
<div class="t tl" style="left:132px">24 Aug 00:00</div>
<div class="t tl" style="left:196px">25 Aug 08:00</div>
<div class="t tl" style="left:260px">26 Aug 16:00</div>
<div class="t tl" style="left:324px">30 Aug 00:00</div>
<div class="t tl" style="left:388px">31 Aug 08:00</div>
<div class="t tl" style="left:452px">1 Sep 16:00</div>
<div class="t tl" style="left:516px">3 Sep 00:00</div>
<div class="t tl" style="left:580px">6 Sep 08:00</div>
<div class="t tl" style="left:644px">7 Sep 16:00</div>
<div class="t tl" style="left:708px">9 Sep 00:00</div>
<div class="t tl" style="left:772px">10 Sep 08:00</div>
<div class="t tl" style="left:836px">13 Sep 16:00</div>
<div class="t tl" style="left:900px">15 Sep 00:00</div>
<div class="t tl" style="left:964px">16 Sep 08:00</div>
<div class="mn" style="left:898px;top:83px;width:262px;height:428px"></div>
<div class="icol" style="left:900px;top:85px;width:25px;height:424px"></div>
<svg class="ic" style="left:905px;top:91px" width="16" height="16" viewBox="0 0 16 16">
<rect x="1" y="1" width="14" height="1" fill="#4a4a52"/>
<defs><linearGradient id="gs905" x1="0" x2="1"><stop offset="0" stop-color="#f0502a"/><stop offset="1" stop-color="#d8321a"/></linearGradient></defs>
<path d="M6 3h4v5h3.5L8 13.2 2.5 8H6z" fill="url(#gs905)"/></svg>
<div class="mt" style="left:933px;top:87px">Sell Limit <span class="dg">0.50</span></div>
<div class="mt ms" style="right:447px;top:87px"><span class="dg">0.92905</span></div>
<div class="sep" style="left:933px;top:113px;width:223px"></div>
<div class="hl" style="left:901px;top:118px;width:256px;height:23px"></div>
<div class="mt" style="left:933px;top:119px">Торговля</div>
<svg class="ic" style="left:1146px;top:127px" width="4" height="6" viewBox="0 0 4 6"><path d="M0 0L3.5 3 0 6z" fill="#000"/></svg>
<svg class="ic" style="left:905px;top:146px" width="16" height="15" viewBox="0 0 16 15" shape-rendering="crispEdges">
<rect x="0" y="0" width="16" height="15" rx="1.2" fill="#2f74c6"/>
<rect x="1" y="1" width="14" height="3" fill="#5aa2e8"/>
<rect x="7" y="1.5" width="7" height="1.5" fill="#e6f3ff"/>
<rect x="1" y="4" width="7" height="10" fill="#d6fba8"/>
<rect x="8" y="4" width="7" height="10" fill="#f9baa6"/>
<g fill="#40103a"><rect x="2" y="5" width="2" height="1"/><rect x="5" y="5" width="2" height="1"/><rect x="9" y="5" width="2" height="1"/><rect x="12" y="5" width="2" height="1"/><rect x="2" y="8" width="2" height="1"/><rect x="5" y="8" width="2" height="1"/><rect x="9" y="8" width="2" height="1"/><rect x="12" y="8" width="2" height="1"/><rect x="2" y="11" width="2" height="1"/><rect x="5" y="11" width="2" height="1"/><rect x="9" y="11" width="2" height="1"/><rect x="12" y="11" width="2" height="1"/></g></svg>
<div class="mt" style="left:933px;top:142px">Стакан цен</div>
<div class="mt ms" style="right:447px;top:142px">Alt+B</div>
<svg class="ic" style="left:905px;top:173px" width="17" height="6" viewBox="0 0 17 6" shape-rendering="crispEdges">
<rect x="0" y="0" width="8" height="6" fill="#e2381a"/>
<rect x="0" y="0" width="4" height="2" fill="#f08a30"/>
<rect x="9" y="0" width="8" height="6" fill="#2a72c4"/>
<rect x="13" y="0" width="4" height="2" fill="#5aaaf0"/>
<rect x="4" y="0" width="8" height="2" fill="#ffffff"/>
<rect x="4" y="0" width="8" height="1" fill="#b8b8b8"/></svg>
<div class="mt" style="left:933px;top:165px">Торговля в один клик</div>
<div class="mt ms" style="right:447px;top:165px">Alt+T</div>
<div class="sep" style="left:933px;top:191px;width:223px"></div>
<div class="mt" style="left:933px;top:197px">Период графика</div>
<svg class="ic" style="left:1146px;top:205px" width="4" height="6" viewBox="0 0 4 6"><path d="M0 0L3.5 3 0 6z" fill="#000"/></svg>
<div class="mt" style="left:933px;top:220px">Шаблон</div>
<svg class="ic" style="left:1146px;top:228px" width="4" height="6" viewBox="0 0 4 6"><path d="M0 0L3.5 3 0 6z" fill="#000"/></svg>
<svg class="ic" style="left:905px;top:246px" width="16" height="16" viewBox="0 0 16 16">
<defs><linearGradient id="rf246" x1="0" y1="0" x2="1" y2="1"><stop offset="0" stop-color="#1d5fc0"/><stop offset="0.6" stop-color="#3a8ee0"/><stop offset="1" stop-color="#9ad6fa"/></linearGradient></defs>
<path d="M2 8.2A5.6 5.6 0 0 1 12.3 5.2" stroke="url(#rf246)" stroke-width="3" fill="none"/>
<path d="M14 8.2A5.6 5.6 0 0 1 3.7 11.2" stroke="url(#rf246)" stroke-width="3" fill="none"/>
<rect x="12.5" y="1" width="1.6" height="7" fill="#1d5fc0"/><rect x="8" y="6.5" width="6.1" height="1.6" fill="#1d5fc0"/>
<rect x="0.2" y="8" width="1.6" height="7" fill="#1d5fc0"/><rect x="0.2" y="8" width="6.1" height="1.6" fill="#1d5fc0"/></svg>
<div class="mt" style="left:933px;top:243px">Обновить</div>
<div class="sep" style="left:933px;top:269px;width:223px"></div>
<div class="mt" style="left:933px;top:275px">Авторазмер</div>
<div class="mt ms" style="right:447px;top:275px">Ctrl+A</div>
<svg class="ic" style="left:906px;top:303px" width="16" height="16" viewBox="0 0 16 16" shape-rendering="crispEdges">
<g fill="#3b7fd0"><rect x="6" y="1" width="1" height="10"/><rect x="9" y="1" width="1" height="10"/><rect x="4" y="4" width="9" height="1"/><rect x="4" y="7" width="9" height="1"/></g>
<g fill="#555"><rect x="2" y="0" width="1" height="14"/><rect x="0" y="11" width="14" height="1"/><rect x="1" y="1" width="3" height="1"/><rect x="12" y="10" width="1" height="3"/></g></svg>
<div class="mt" style="left:933px;top:298px">Сетка</div>
<div class="mt ms" style="right:447px;top:298px">Ctrl+G</div>
<svg class="ic" style="left:906px;top:326px" width="16" height="16" viewBox="0 0 16 16" shape-rendering="crispEdges">
<path d="M3 11V9L5 7 6 8.5 7 10 9 8.5 11 8 12 8.5V11z" fill="#22cc22"/>
<g fill="#555"><rect x="2" y="0" width="1" height="14"/><rect x="0" y="11" width="14" height="1"/><rect x="1" y="1" width="3" height="1"/><rect x="12" y="10" width="1" height="3"/></g></svg>
<div class="mt" style="left:933px;top:321px">Объемы</div>
<div class="mt ms" style="right:447px;top:321px">Ctrl+L</div>
<div class="sep" style="left:933px;top:347px;width:223px"></div>
<svg class="ic" style="left:905px;top:356px" width="16" height="16" viewBox="0 0 16 16">
<path d="M9.2 9.8L14.2 14.8" stroke="#a07a10" stroke-width="3"/><path d="M9.2 9.8L14.2 14.8" stroke="#f0d050" stroke-width="1.6"/>
<circle cx="6" cy="6.2" r="5" fill="#e6f6ff" stroke="#3a7fd0" stroke-width="1.3"/><rect x="3.5" y="5.5" width="5" height="1.4" fill="#2a6ab8"/><rect x="5.3" y="3.7" width="1.4" height="5" fill="#2a6ab8"/></svg>
<div class="mt" style="left:933px;top:353px">Увеличение</div>
<div class="mt ms" style="right:447px;top:353px">+</div>
<svg class="ic" style="left:905px;top:379px" width="16" height="16" viewBox="0 0 16 16">
<path d="M9.2 9.8L14.2 14.8" stroke="#a07a10" stroke-width="3"/><path d="M9.2 9.8L14.2 14.8" stroke="#f0d050" stroke-width="1.6"/>
<circle cx="6" cy="6.2" r="5" fill="#e6f6ff" stroke="#3a7fd0" stroke-width="1.3"/><rect x="3.5" y="5.5" width="5" height="1.4" fill="#2a6ab8"/></svg>
<div class="mt" style="left:933px;top:376px">Уменьшение</div>
<div class="mt ms" style="right:447px;top:376px">-</div>
<div class="sep" style="left:933px;top:402px;width:223px"></div>
<svg class="ic" style="left:904px;top:411px" width="18" height="17" viewBox="0 0 18 17">
<rect x="0.7" y="0.7" width="13" height="12.6" rx="1" fill="#fff" stroke="#3a7fd0" stroke-width="1.3"/>
<path d="M4 3v7M3 4l1-1 1 1M3 9l1 1 1-1" stroke="#5a8ab0" stroke-width="0.9" fill="none"/>
<rect x="8.5" y="6.5" width="9" height="10" rx="1.2" fill="#3a80d0"/>
<rect x="10.5" y="7" width="5" height="3" fill="#cfe6fb"/><rect x="10.5" y="12" width="5" height="4" fill="#eaf4ff"/></svg>
<div class="mt" style="left:933px;top:408px">Сохранить как рисунок</div>
<svg class="ic" style="left:904px;top:434px" width="18" height="17" viewBox="0 0 18 17">
<rect x="6" y="6" width="11" height="8" rx="2" fill="#f4f4f4" stroke="#777" stroke-width="1"/>
<rect x="8" y="12" width="7" height="4" fill="#fff" stroke="#777" stroke-width="1"/>
<rect x="0.7" y="0.7" width="11.5" height="13.5" rx="1" fill="#fbe774" stroke="#c88a18" stroke-width="1.3"/>
<path d="M3.5 3v7h6M2.5 4l1-1 1 1M8.5 9l1 1-1 1" stroke="#4a86b8" stroke-width="0.9" fill="none"/></svg>
<div class="mt" style="left:933px;top:431px">Предварительный просмотр</div>
<svg class="ic" style="left:904px;top:457px" width="18" height="17" viewBox="0 0 18 17">
<rect x="4" y="0.7" width="9" height="8" fill="#fbe774" stroke="#c88a18" stroke-width="1"/>
<path d="M7 2.5v4h3" stroke="#4a86b8" stroke-width="0.9" fill="none"/>
<rect x="0.7" y="6" width="16" height="7" rx="2.5" fill="#f2f2f2" stroke="#707070" stroke-width="1.2"/>
<rect x="4" y="11" width="9" height="5.3" rx="1" fill="#f8f8f8" stroke="#707070" stroke-width="1.2"/></svg>
<div class="mt" style="left:933px;top:454px">Печать</div>
<div class="mt ms" style="right:447px;top:454px">Ctrl+P</div>
<div class="sep" style="left:933px;top:480px;width:223px"></div>
<svg class="ic" style="left:905px;top:490px" width="18" height="17" viewBox="0 0 18 17">
<rect x="0.7" y="0.7" width="12.5" height="10.5" rx="1" fill="#fff" stroke="#3a7fd0" stroke-width="1.3"/>
<path d="M3.5 3v6M2.6 4l.9-1 .9 1M2.6 8l.9 1 .9-1" stroke="#5a8ab0" stroke-width="0.9" fill="none"/>
<g transform="translate(11.5 11)"><path d="M-1 -5.5h2l.5 1.8 1.6-.9 1.4 1.4-.9 1.6 1.8.5v2l-1.8.5.9 1.6-1.4 1.4-1.6-.9-.5 1.8h-2l-.5-1.8-1.6.9-1.4-1.4.9-1.6-1.8-.5v-2l1.8-.5-.9-1.6 1.4-1.4 1.6.9z" fill="#e9c31e" stroke="#b8900a" stroke-width="0.6"/><circle r="1.5" fill="#fff8d0"/></g></svg>
<div class="mt" style="left:933px;top:486px">Свойства...</div>
<div class="mt ms" style="right:447px;top:486px">F8</div>
<div class="mn" style="left:1154px;top:114px;width:177px;height:116px"></div>
<div class="icol" style="left:1156px;top:116px;width:25px;height:112px"></div>
<svg class="ic" style="left:1161px;top:122px" width="16" height="16" viewBox="0 0 16 16">
<rect x="1" y="1" width="14" height="1" fill="#4a4a52"/>
<defs><linearGradient id="gs1161" x1="0" x2="1"><stop offset="0" stop-color="#f0502a"/><stop offset="1" stop-color="#d8321a"/></linearGradient></defs>
<path d="M6 3h4v5h3.5L8 13.2 2.5 8H6z" fill="url(#gs1161)"/></svg>
<div class="mt" style="left:1189px;top:118px">Sell Limit <span class="dg">0.50</span></div>
<div class="mt ms" style="right:276px;top:118px"><span class="dg">0.92905</span></div>
<div class="sep" style="left:1189px;top:144px;width:138px"></div>
<svg class="ic" style="left:1161px;top:153px" width="16" height="16" viewBox="0 0 16 16">
<defs><linearGradient id="gb1161" x1="0" x2="1"><stop offset="0" stop-color="#5aa8f0"/><stop offset="1" stop-color="#1a66c8"/></linearGradient></defs>
<path d="M8 1.4L13.5 7H10v5H6V7H2.5z" fill="url(#gb1161)"/>
<rect x="1" y="13" width="14" height="1" fill="#4a4a52"/></svg>
<div class="mt" style="left:1189px;top:150px">Buy Stop <span class="dg">0.50</span></div>
<div class="mt ms" style="right:276px;top:150px"><span class="dg">0.92905</span></div>
<div class="hl" style="left:1157px;top:172px;width:171px;height:23px"></div>
<svg class="ic" style="left:1159px;top:174px" width="19" height="19" viewBox="0 0 19 19">
<defs><radialGradient id="bg1159" cx="0.4" cy="0.35" r="0.75"><stop offset="0" stop-color="#fff6b0"/><stop offset="0.6" stop-color="#f0cc48"/><stop offset="1" stop-color="#c89818"/></radialGradient></defs>
<path d="M7 1C4.3 1 3.3 3.6 3.3 6.2L3.3 8.8C3.3 10.3 1.8 11.3 1 12.6L13 12.6C12.2 11.3 10.7 10.3 10.7 8.8L10.7 6.2C10.7 3.6 9.7 1 7 1Z" fill="url(#bg1159)" stroke="#b88a10" stroke-width="0.7"/>
<circle cx="7" cy="13.6" r="1.3" fill="#d8a820"/>
<path d="M11 8h3v3h3v3h-3v3h-3v-3H8v-3h3z" fill="#30d030" stroke="#087808" stroke-width="0.9"/></svg>
<div class="mt" style="left:1189px;top:173px">Алерт</div>
<div class="mt ms" style="right:276px;top:173px"><span class="dg">0.92905</span></div>
<div class="sep" style="left:1189px;top:199px;width:138px"></div>
<svg class="ic" style="left:1161px;top:208px" width="18" height="18" viewBox="0 0 18 18">
<path d="M0.6 0.6h7.4l3 3v10.2H0.6z" fill="#fafafa" stroke="#5a5a5a" stroke-width="1.1"/>
<path d="M8 0.6v3h3" fill="none" stroke="#5a5a5a" stroke-width="0.8"/>
<g fill="#8a8a8a"><rect x="2.3" y="3" width="3" height="1.2"/><rect x="2.3" y="6" width="6" height="1"/><rect x="2.3" y="9" width="4.5" height="1"/></g>
<path d="M9 6h3v3h3v3h-3v3H9v-3H6V9h3z" fill="#30d030" stroke="#087808" stroke-width="0.9"/></svg>
<div class="mt" style="left:1189px;top:205px">Новый ордер</div>
<div class="mt ms" style="right:276px;top:205px">F9</div>
</body></html>
